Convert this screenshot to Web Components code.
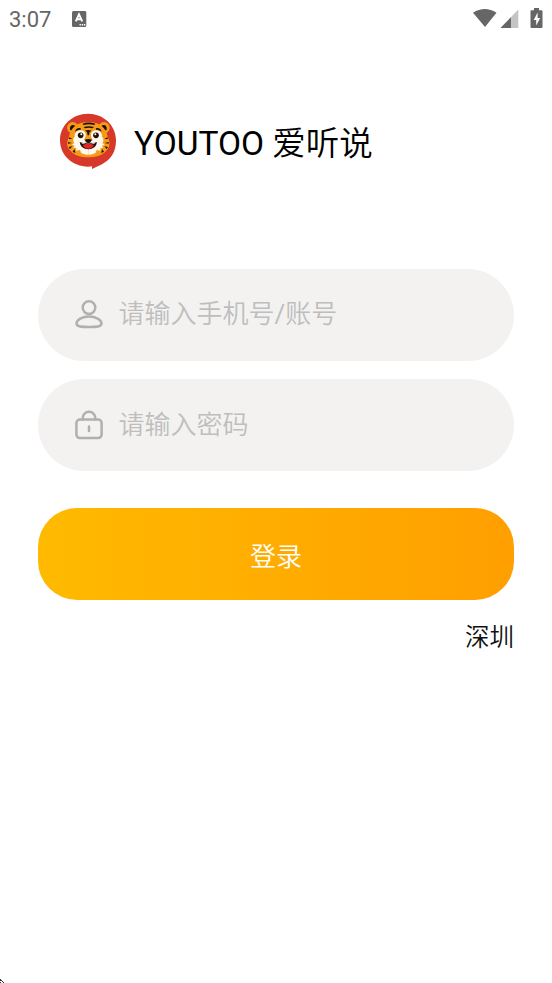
<!DOCTYPE html>
<html lang="zh-CN">
<head>
<meta charset="utf-8">
<title>YOUTOO 爱听说</title>
<style>
    body {
        margin: 0;
        background: #fff;
        color: #000;
        font-family: Roboto, "Noto Sans CJK SC", sans-serif;
        font-weight: 350;
    }
</style>
</head>
<body>
<login-page>
    <status-bar slot="status" time="3:07"></status-bar>
    <brand-header slot="brand"><b>YOUTOO </b>爱听说</brand-header>
    <login-field icon="user">请输入手机号<b>/</b>账号</login-field>
    <login-field icon="lock">请输入密码</login-field>
    <login-button>登录</login-button>
    <city-link>深圳</city-link>
</login-page>

<script>
const define = (name, html, setup) => {
    const template = document.createElement('template');
    template.innerHTML = html;
    customElements.define(name, class extends HTMLElement {
        constructor () {
            super();
            this.attachShadow({mode: 'open'});
            this.shadowRoot.appendChild(template.content.cloneNode(true));
            if (setup) {
                setup(this, this.shadowRoot);
            }
        }
    });
};

define('login-page', `
<style>
    :host {
        display: flex;
        flex-direction: column;
        box-sizing: border-box;
        height: 983px;
        overflow: hidden;
    }
    main {
        display: flex;
        flex-direction: column;
        flex: 1;
        padding: 99.6px 38px 0;
    }
    .corner {
        display: block;
        width: 4px;
        height: 4px;
    }
</style>
<slot name="status"></slot>
<slot name="brand"></slot>
<main><slot></slot></main>
<svg class="corner" viewBox="0 0 4 4" fill="#333" shape-rendering="crispEdges">
    <path d="M0 0h1v2H0zM1 1h1v1H1zM2 2h1v1H2zM3 3h1v1H3zM0 3h1v1H0z"/>
</svg>
`);

define('status-bar', `
<style>
    :host {
        display: flex;
        align-items: center;
        box-sizing: border-box;
        height: 38px;
        padding: 0 8px 0 9px;
        color: #666;
    }
    time {
        width: 63px;
        padding-top: 1px;
        font-size: 22px;
        font-weight: 400;
        line-height: 38px;
    }
    svg { display: block; }
    .signals { margin-left: auto; }
</style>
<time></time>
<svg width="15" height="16" viewBox="0 0 15 16">
    <rect width="14.3" height="16" rx="1.5" fill="#666"/>
    <path d="M3.8 10.4 7 3.4l3.2 7M5 8.3h4" fill="none" stroke="#fff" stroke-width="1.9"/>
    <path d="M7.5 13h1.4v1.4H7.5zm2.2 0h1.4v1.4H9.7zm2.2 0h1.4v1.4h-1.4z" fill="#fff"/>
</svg>
<svg class="signals" width="71" height="22" viewBox="0 0 71 22">
    <path d="M0 4.7Q11.7-2.8 23.5 4.7L12 19Z" fill="#666"/>
    <path d="M45.3 1.5V20H27.5Z" fill="#c4c4c4"/>
    <path d="M38 9.2V20H27.5Z" fill="#666"/>
    <path d="M61 0h5v2.2h2.5a1 1 0 0 1 1 1V19a1 1 0 0 1-1 1h-10a1 1 0 0 1-1-1V3.2a1 1 0 0 1 1-1H61Z" fill="#666"/>
    <path d="M64.6 4.5 60.7 12h2.5v5.5l4-7.5h-2.6Z" fill="#fff"/>
</svg>
`, (el, root) => {
    root.querySelector('time').textContent = el.getAttribute('time') || '';
});

define('brand-header', `
<style>
    :host {
        display: flex;
        align-items: center;
        height: 56px;
        padding: 75px 0 0 60px;
        gap: 18px;
        font-size: 33.5px;
        white-space: nowrap;
    }
    ::slotted(b) { font-weight: 400; }
    svg { flex: none; }
    span {
        line-height: 56px;
        padding-top: 6px;
    }
</style>
<svg width="56" height="56" viewBox="6 9 168 168">
    <path d="M90 11c46 0 84 34 84 80 0 36-16 58-42 72l-30 14v-8c-4 1-8 1-12 1-46 0-84-34-84-79 0-46 38-80 84-80Z" fill="#d6382a"/>
    <g id="ear">
        <circle cx="44" cy="53" r="17" fill="#f69a17"/>
        <path d="M36 59c-2-12 8-18 17-10L43 63Z" fill="#1b130a"/>
    </g>
    <use href="#ear" transform="matrix(-1 0 0 1 182 0)"/>
    <path d="M91 36c34 0 54 18 58 44 8 16 8 30-4 42-13 14-30 20-54 20s-41-6-54-20c-12-12-12-26-4-42 4-26 24-44 58-44Z" fill="#f69a17"/>
    <g id="cheek">
        <path d="M69 61c-12 0-20 8-19 19-6 5-5 13-1 20l-7 3 8 5-4 5 9 1-1 8 12-2 3 8c7 4 14 6 22 6V88l-9-4c4-12-1-23-13-23Z" fill="#fff8ec"/>
        <path d="M65 54c-8 0-13 5-14 11 6-5 11-6 17-6 1-3 0-5-3-5ZM34 82l9 5-11 0Zm-4 14 12 3-12 2Zm2 15 11-2-7 8Zm12 14 6-8 2 12Z" fill="#1b130a"/>
        <circle cx="68" cy="76" r="8.5" fill="#1b130a"/>
        <circle cx="70" cy="73" r="3" fill="#fff"/>
    </g>
    <use href="#cheek" transform="matrix(-1 0 0 1 182 0)"/>
    <path d="M74 41q17-7 38 0l-3 4q-17-5-33 0Zm3 10q15-5 31 0l-5 4q-11-3-22 0Zm4 11q10-4 20 0l-6 4-2 10h-4l-2-10Z" fill="#1b130a"/>
    <path d="M84 78h14l6 13H78Z" fill="#f69a17"/>
    <path d="M80 89q11-4 22 0l-4 7q-7 4-14 0Z" fill="#1b130a"/>
    <path d="M65 96q14 6 26 0 13 6 26 0-3 22-26 22-23 0-26-22Z" fill="#1b130a"/>
    <path d="M74 105q17-9 34 0-5 11-17 11t-17-11Z" fill="#e32624"/>
    <path d="M71 99q20 5 40 0l-3 3q-17-3-34 0Z" fill="#fff"/>
</svg>
<span><slot></slot></span>
`);

const fieldIcons = {
    user: '<circle cx="14" cy="7.6" r="6.3"/><path d="M14 16.6c6.500 0 12.500 3 12.500 7 0 3.200-5 3.500-12.500 3.500S1.500 26.800 1.500 23.600c0-4 6-7 12.500-7Z"/>',
    lock: '<rect x="1.4" y="9.5" width="25.2" height="18.6" rx="3.5"/><path d="M7.7 9.5V8a6.3 6.3 0 0 1 12.6 0v1.5M14 16.5V21"/>'
};

define('login-field', `
<style>
    :host {
        display: flex;
        align-items: center;
        box-sizing: border-box;
        height: 92.4px;
        margin-bottom: 18px;
        padding-left: 37px;
        gap: 15.5px;
        border-radius: 46.2px;
        background: #f3f2f1;
        color: #bebebe;
        font-size: 26px;
        white-space: nowrap;
    }
    ::slotted(b) { font-weight: 400; }
    svg {
        flex: none;
        fill: none;
        stroke: #b0b0b0;
        stroke-width: 2.5;
        stroke-linecap: round;
    }
    span {
        line-height: 40px;
        padding-bottom: 1px;
    }
</style>
<svg width="28" height="30" viewBox="0 0 28 30"></svg>
<span><slot></slot></span>
`, (el, root) => {
    root.querySelector('svg').innerHTML = fieldIcons[el.getAttribute('icon')] || '';
});

define('login-button', `
<style>
    :host {
        display: flex;
        align-items: center;
        justify-content: center;
        height: 92.4px;
        margin-top: 18.7px;
        border-radius: 39px;
        background: linear-gradient(90deg, #ffba00, #ff9f00);
        color: #fff;
        font-size: 26px;
    }
</style>
<slot></slot>
`);

define('city-link', `
<style>
    :host {
        display: block;
        align-self: flex-end;
        margin-top: 20px;
        color: #111;
        font-size: 24.5px;
        line-height: 36px;
    }
</style>
<slot></slot>
`);
</script>
</body>
</html>
